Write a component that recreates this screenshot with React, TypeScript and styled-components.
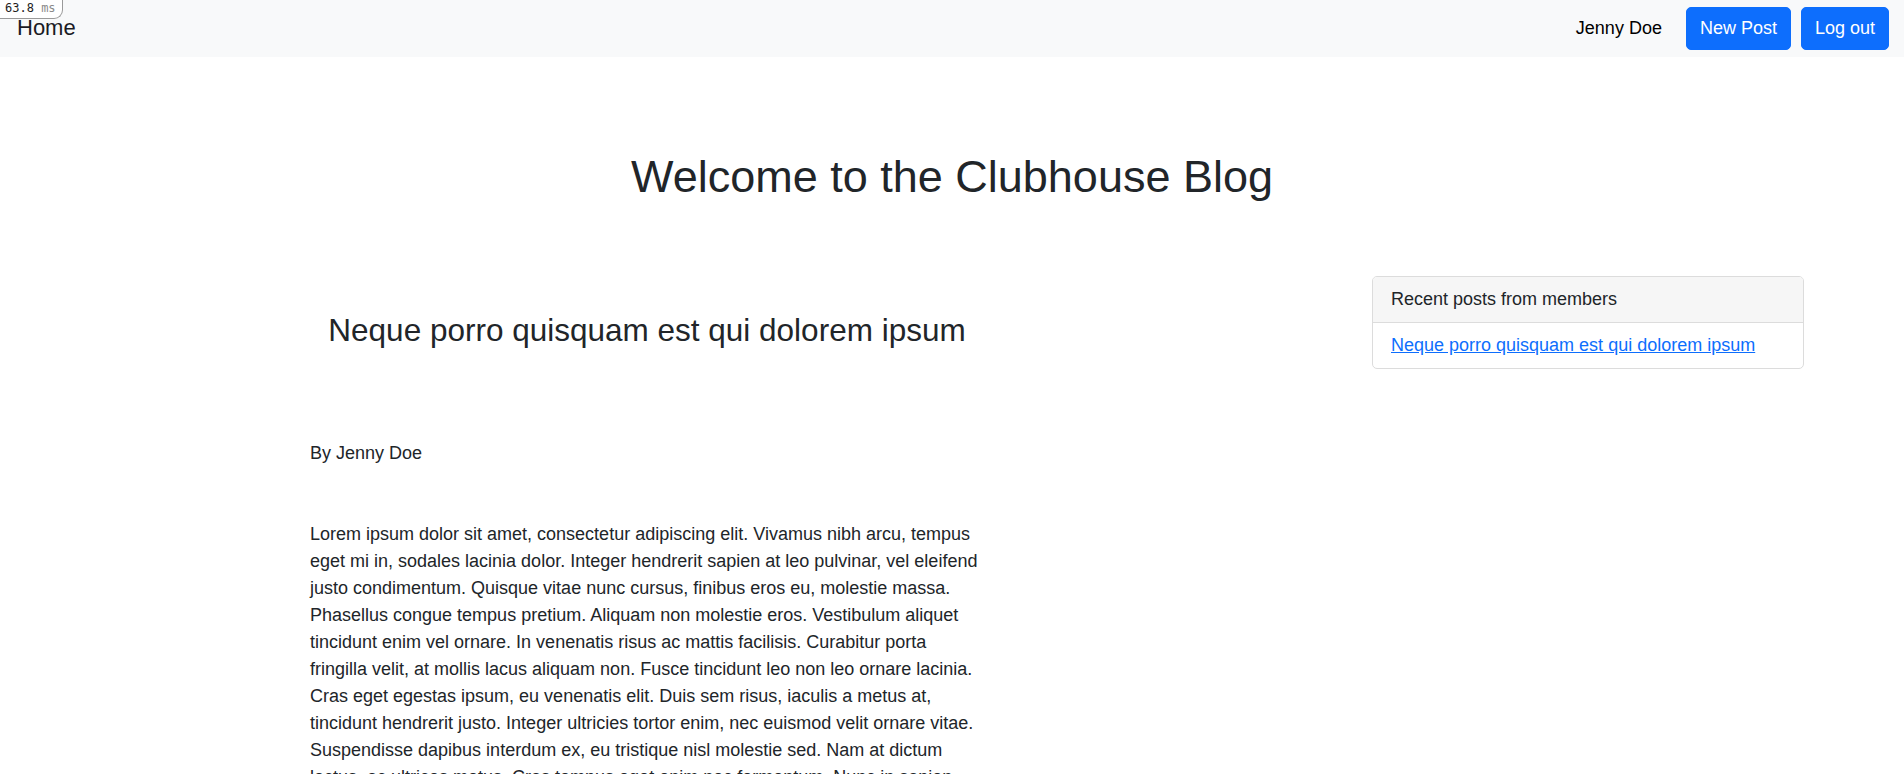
import styled, { createGlobalStyle } from "styled-components";

const GlobalStyle = createGlobalStyle`
  body {
    margin: 0;
    font-family: "Liberation Sans", Arial, sans-serif;
    color: #212529;
    background: #ffffff;
  }
`;

const TimingBadge = styled.div`
  position: absolute;
  top: 0;
  left: 0;
  z-index: 10;
  padding: 1px 6px 2px 5px;
  background: #ffffff;
  border: 1px solid #9a9a9a;
  border-top: none;
  border-left: none;
  border-radius: 0 0 9px 0;
  font-family: "DejaVu Sans Mono", monospace;
  font-size: 12px;
  line-height: 15px;
  color: #222;
`;

const TimingUnit = styled.span`
  color: #8a8a8a;
`;

const NavBar = styled.nav`
  display: flex;
  align-items: center;
  justify-content: space-between;
  height: 57px;
  padding: 0 15px 0 17px;
  background-color: #f8f9fa;
`;

const Brand = styled.a`
  font-size: 22px;
  line-height: 30px;
  color: #1b1b24;
  text-decoration: none;
  margin-top: -2px;
`;

const NavRight = styled.div`
  display: flex;
  align-items: center;
  gap: 10px;
`;

const UserName = styled.span`
  font-size: 18px;
  color: #000;
  margin-right: 14px;
`;

const NavButton = styled.button`
  font-family: "Liberation Sans", Arial, sans-serif;
  font-size: 18px;
  line-height: 27px;
  padding: 7px 13px;
  color: #ffffff;
  background-color: #0d6efd;
  border: 1px solid #0d6efd;
  border-radius: 5px;
  cursor: pointer;
`;

const PageTitle = styled.h1`
  margin: 93px 0 0;
  text-align: center;
  font-size: 45px;
  font-weight: 400;
  line-height: 1.2;
  color: #212529;
`;

const Layout = styled.div`
  display: grid;
  grid-template-columns: 1fr 432px;
  column-gap: 78px;
  align-items: start;
  margin-top: 72px;
  padding-right: 100px;
`;

const Post = styled.article`
  width: 674px;
  margin: 0 auto;
  padding-top: 36px;
`;

const PostTitle = styled.h2`
  margin: 0 0 90px;
  text-align: center;
  font-size: 31.5px;
  font-weight: 400;
  line-height: 1.2;
`;

const Author = styled.p`
  margin: 0 0 54px;
  font-size: 18px;
  line-height: 27px;
`;

const PostBody = styled.p`
  margin: 0;
  font-size: 18px;
  line-height: 27px;
`;

const Card = styled.aside`
  border: 1px solid #dcdcdc;
  border-radius: 5px;
  overflow: hidden;
`;

const CardHeader = styled.div`
  padding: 9px 18px;
  font-size: 18px;
  line-height: 27px;
  background-color: #f6f6f6;
  border-bottom: 1px solid #dcdcdc;
`;

const CardBody = styled.div`
  padding: 9px 18px;
  font-size: 18px;
  line-height: 27px;
`;

const PostLink = styled.a`
  color: #0d6efd;
  text-decoration: underline;
`;

const posts = [{ title: "Neque porro quisquam est qui dolorem ipsum", author: "Jenny Doe" }];

const lorem =
  "Lorem ipsum dolor sit amet, consectetur adipiscing elit. Vivamus nibh arcu, tempus eget mi in, sodales lacinia dolor. Integer hendrerit sapien at leo pulvinar, vel eleifend justo condimentum. Quisque vitae nunc cursus, finibus eros eu, molestie massa. Phasellus congue tempus pretium. Aliquam non molestie eros. Vestibulum aliquet tincidunt enim vel ornare. In venenatis risus ac mattis facilisis. Curabitur porta fringilla velit, at mollis lacus aliquam non. Fusce tincidunt leo non leo ornare lacinia. Cras eget egestas ipsum, eu venenatis elit. Duis sem risus, iaculis a metus at, tincidunt hendrerit justo. Integer ultricies tortor enim, nec euismod velit ornare vitae. Suspendisse dapibus interdum ex, eu tristique nisl molestie sed. Nam at dictum lectus, ac ultrices metus. Cras tempus eget enim nec fermentum. Nunc in sapien pellentesque, aliquet nisi vel, pharetra ligula. Donec ac mauris at nunc volutpat fermentum in sit amet ligula.";

const App = () => {
  const post = posts[0];
  return (
    <>
      <GlobalStyle />
      <TimingBadge>
        63.8 <TimingUnit>ms</TimingUnit>
      </TimingBadge>
      <NavBar>
        <Brand href="#">Home</Brand>
        <NavRight>
          <UserName>Jenny Doe</UserName>
          <NavButton>New Post</NavButton>
          <NavButton>Log out</NavButton>
        </NavRight>
      </NavBar>
      <PageTitle>Welcome to the Clubhouse Blog</PageTitle>
      <Layout>
        <main>
          <Post>
            <PostTitle>{post.title}</PostTitle>
            <Author>By {post.author}</Author>
            <PostBody>{lorem}</PostBody>
          </Post>
        </main>
        <Card>
          <CardHeader>Recent posts from members</CardHeader>
          <CardBody>
            {posts.map((p) => (
              <PostLink key={p.title} href="#">
                {p.title}
              </PostLink>
            ))}
          </CardBody>
        </Card>
      </Layout>
    </>
  );
};

export default App;
